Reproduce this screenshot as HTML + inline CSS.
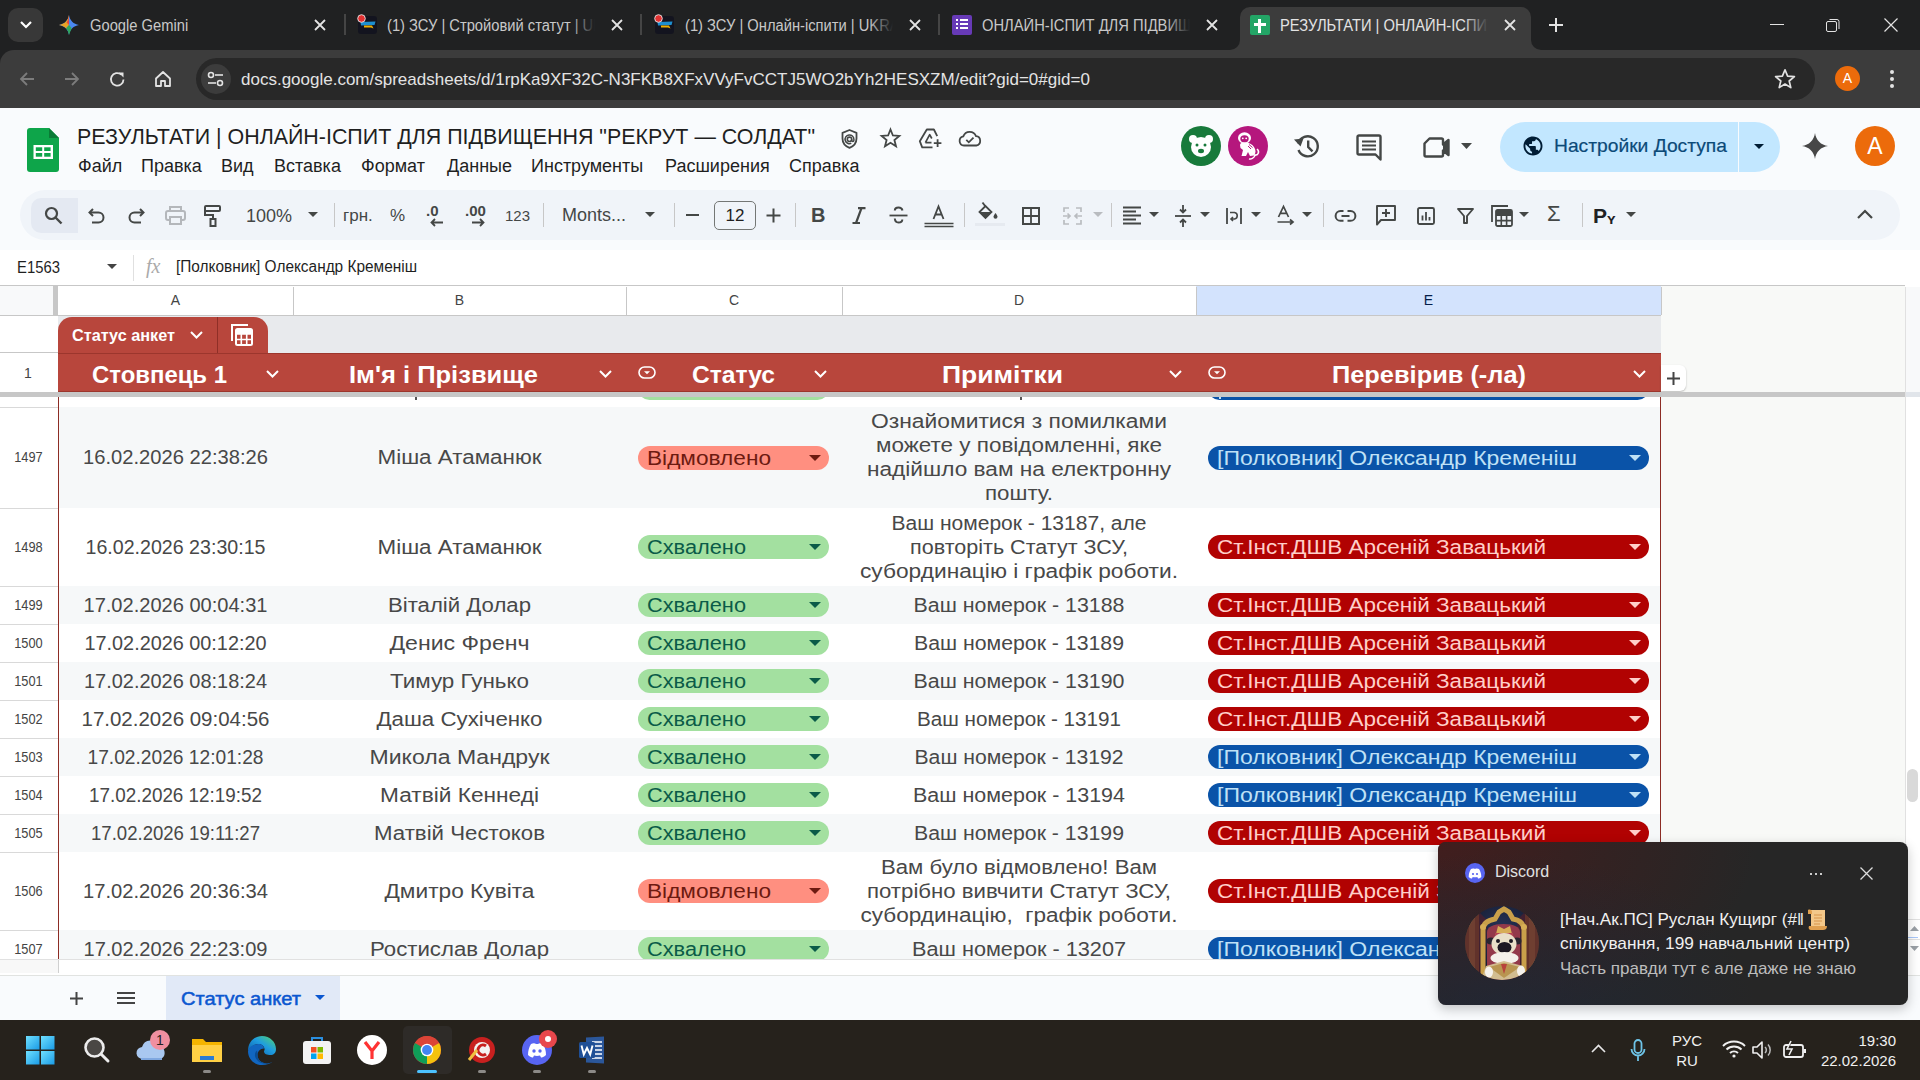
<!DOCTYPE html><html><head><meta charset="utf-8"><style>
*{box-sizing:border-box;margin:0;padding:0}
html,body{width:1920px;height:1080px;overflow:hidden;background:#f9fbfd;font-family:"Liberation Sans",sans-serif}
.ab{position:absolute}
.t{position:absolute;white-space:nowrap;line-height:1}
svg{position:absolute;overflow:visible}
</style></head><body>
<div class="ab" style="left:0;top:0;width:1920px;height:50px;background:#202122"></div>
<div class="ab" style="left:0;top:50px;width:1920px;height:58px;background:#3c3c3c"></div>
<div class="ab" style="left:0;top:50px;width:16px;height:16px;background:#202122"></div>
<div class="ab" style="left:0;top:50px;width:16px;height:16px;background:#3c3c3c;border-top-left-radius:14px"></div>
<div class="ab" style="left:8px;top:8px;width:35px;height:34px;background:#383838;border-radius:10px"></div>
<svg style="left:19px;top:19px" width="14" height="12"><path d="M2 3 L7 8 L12 3" stroke="#fff" stroke-width="2.2" fill="none"/></svg>
<div class="ab" style="left:1240px;top:7px;width:291px;height:43px;background:#3c3c3c;border-radius:10px 10px 0 0"></div>
<div class="ab" style="left:1230px;top:40px;width:10px;height:10px;background:#3c3c3c"></div><div class="ab" style="left:1220px;top:30px;width:20px;height:20px;background:#202122;border-radius:0 0 10px 0"></div>
<div class="ab" style="left:1531px;top:40px;width:10px;height:10px;background:#3c3c3c"></div><div class="ab" style="left:1531px;top:30px;width:20px;height:20px;background:#202122;border-radius:0 0 0 10px"></div>
<div class="t" style="left:90px;top:18px;width:208px;height:20px;overflow:hidden;font-size:16px;color:#c8c8c8"><span style="display:inline-block;transform:scaleX(0.92);transform-origin:left center">Google Gemini</span></div>
<div class="ab" style="left:274px;top:12px;width:24px;height:26px;background:linear-gradient(90deg,rgba(0,0,0,0),#202122)"></div>
<svg style="left:313px;top:18px" width="14" height="14"><path d="M2 2L12 12M12 2L2 12" stroke="#e3e3e3" stroke-width="1.8"/></svg>
<div class="t" style="left:387px;top:18px;width:208px;height:20px;overflow:hidden;font-size:16px;color:#c8c8c8"><span style="display:inline-block;transform:scaleX(0.92);transform-origin:left center">(1) ЗСУ | Стройовий статут | UKRAINE</span></div>
<div class="ab" style="left:571px;top:12px;width:24px;height:26px;background:linear-gradient(90deg,rgba(0,0,0,0),#202122)"></div>
<svg style="left:610px;top:18px" width="14" height="14"><path d="M2 2L12 12M12 2L2 12" stroke="#e3e3e3" stroke-width="1.8"/></svg>
<div class="t" style="left:685px;top:18px;width:208px;height:20px;overflow:hidden;font-size:16px;color:#c8c8c8"><span style="display:inline-block;transform:scaleX(0.92);transform-origin:left center">(1) ЗСУ | Онлайн-іспити | UKRAINE</span></div>
<div class="ab" style="left:869px;top:12px;width:24px;height:26px;background:linear-gradient(90deg,rgba(0,0,0,0),#202122)"></div>
<svg style="left:908px;top:18px" width="14" height="14"><path d="M2 2L12 12M12 2L2 12" stroke="#e3e3e3" stroke-width="1.8"/></svg>
<div class="t" style="left:982px;top:18px;width:208px;height:20px;overflow:hidden;font-size:16px;color:#c8c8c8"><span style="display:inline-block;transform:scaleX(0.92);transform-origin:left center">ОНЛАЙН-ІСПИТ ДЛЯ ПІДВИЩЕННЯ</span></div>
<div class="ab" style="left:1166px;top:12px;width:24px;height:26px;background:linear-gradient(90deg,rgba(0,0,0,0),#202122)"></div>
<svg style="left:1205px;top:18px" width="14" height="14"><path d="M2 2L12 12M12 2L2 12" stroke="#e3e3e3" stroke-width="1.8"/></svg>
<div class="t" style="left:1280px;top:18px;width:208px;height:20px;overflow:hidden;font-size:16px;color:#e3e3e3"><span style="display:inline-block;transform:scaleX(0.92);transform-origin:left center">РЕЗУЛЬТАТИ | ОНЛАЙН-ІСПИТ ДЛЯ</span></div>
<div class="ab" style="left:1464px;top:12px;width:24px;height:26px;background:linear-gradient(90deg,rgba(0,0,0,0),#3c3c3c)"></div>
<svg style="left:1503px;top:18px" width="14" height="14"><path d="M2 2L12 12M12 2L2 12" stroke="#e3e3e3" stroke-width="1.8"/></svg>
<div class="ab" style="left:344px;top:14px;width:2px;height:21px;background:#454545"></div>
<div class="ab" style="left:640px;top:14px;width:2px;height:21px;background:#454545"></div>
<div class="ab" style="left:938px;top:14px;width:2px;height:21px;background:#454545"></div>
<svg style="left:59px;top:15px" width="20" height="20"><defs><linearGradient id="gg" x1="0" y1="0" x2="1" y2="1"><stop offset="0" stop-color="#f2b400"/><stop offset=".35" stop-color="#ea4335"/><stop offset=".6" stop-color="#4285f4"/><stop offset="1" stop-color="#34a853"/></linearGradient></defs><path d="M10 0 C10.8 5.5 14.5 9.2 20 10 C14.5 10.8 10.8 14.5 10 20 C9.2 14.5 5.5 10.8 0 10 C5.5 9.2 9.2 5.5 10 0Z" fill="#4a88f0"/><path d="M10 0 C9.2 5.5 5.5 9.2 0 10 C3 10.4 5.5 11.6 7.2 13.5 L10 10Z" fill="#e9a326"/><path d="M10 0 C9.8 3 9 5.5 7.6 7.6 L10 10Z" fill="#e5483f"/><path d="M10 20 C9.6 17 8.5 14.8 7 13.2 L10 10 L12.6 13Z" fill="#2fa85a"/></svg>
<div class="ab" style="left:358px;top:16px;width:19px;height:18px;background:#13141f;border-radius:3px"></div>
<svg style="left:358px;top:16px" width="19" height="18"><path d="M2.5 6L17.5 5.5L16.5 9L3 9.5Z" fill="#1d8fcf"/><path d="M6 9.5H14L15.5 12.5L13 11.5H6Z" fill="#f0b000"/><circle cx="3.5" cy="2.5" r="3.8" fill="#e33131" stroke="#e8e8e8" stroke-width="0.9"/></svg>
<div class="ab" style="left:655px;top:16px;width:19px;height:18px;background:#13141f;border-radius:3px"></div>
<svg style="left:655px;top:16px" width="19" height="18"><path d="M2.5 6L17.5 5.5L16.5 9L3 9.5Z" fill="#1d8fcf"/><path d="M6 9.5H14L15.5 12.5L13 11.5H6Z" fill="#f0b000"/><circle cx="3.5" cy="2.5" r="3.8" fill="#e33131" stroke="#e8e8e8" stroke-width="0.9"/></svg>
<div class="ab" style="left:952px;top:15px;width:20px;height:20px;background:#673ab7;border-radius:2px"></div>
<div class="ab" style="left:956px;top:19px;width:2px;height:2px;background:#fff"></div><div class="ab" style="left:960px;top:19px;width:8px;height:2px;background:#fff"></div>
<div class="ab" style="left:956px;top:23px;width:2px;height:2px;background:#fff"></div><div class="ab" style="left:960px;top:23px;width:8px;height:2px;background:#fff"></div>
<div class="ab" style="left:956px;top:27px;width:2px;height:2px;background:#fff"></div><div class="ab" style="left:960px;top:27px;width:8px;height:2px;background:#fff"></div>
<div class="ab" style="left:1250px;top:15px;width:20px;height:20px;background:#23a566;border-radius:2px"></div>
<div class="ab" style="left:1254px;top:23px;width:12px;height:3px;background:#fff"></div><div class="ab" style="left:1258px;top:19px;width:3px;height:14px;background:#fff"></div>
<svg style="left:1548px;top:17px" width="16" height="16"><path d="M8 1V15M1 8H15" stroke="#e3e3e3" stroke-width="2"/></svg>
<div class="ab" style="left:1770px;top:24px;width:14px;height:1px;background:#e3e3e3"></div>
<svg style="left:1826px;top:18px" width="14" height="14"><rect x="0.5" y="3.5" width="10" height="10" rx="1.5" stroke="#e3e3e3" fill="none"/><path d="M3.5 1.5 H11 a2 2 0 0 1 2 2 V11" stroke="#e3e3e3" fill="none"/></svg>
<svg style="left:1884px;top:18px" width="14" height="14"><path d="M0.5 0.5L13.5 13.5M13.5 0.5L0.5 13.5" stroke="#e3e3e3" stroke-width="1.2"/></svg>
<svg style="left:19px;top:71px" width="16" height="16"><path d="M15 8H2M8 2L2 8L8 14" stroke="#7c7c7c" stroke-width="1.8" fill="none"/></svg>
<svg style="left:64px;top:71px" width="16" height="16"><path d="M1 8H14M8 2L14 8L8 14" stroke="#7c7c7c" stroke-width="1.8" fill="none"/></svg>
<svg style="left:109px;top:71px" width="17" height="17"><path d="M14.5 8.5 A6.3 6.3 0 1 1 12.3 3.6" stroke="#e3e3e3" stroke-width="1.8" fill="none"/><path d="M9.5 1.5 H14.5 V6.5Z" fill="#e3e3e3"/></svg>
<svg style="left:154px;top:70px" width="18" height="18"><path d="M2 8.5L9 2L16 8.5V16H11V11H7V16H2Z" stroke="#e3e3e3" stroke-width="1.8" fill="none" stroke-linejoin="round"/></svg>
<div class="ab" style="left:196px;top:58px;width:1619px;height:42px;background:#282828;border-radius:21px"></div>
<div class="ab" style="left:201px;top:64px;width:30px;height:30px;background:#3c3c3c;border-radius:50%"></div>
<svg style="left:207px;top:71px" width="18" height="16"><circle cx="4" cy="4" r="2.5" stroke="#e3e3e3" stroke-width="1.6" fill="none"/><path d="M8 4H16" stroke="#e3e3e3" stroke-width="1.6"/><circle cx="13" cy="12" r="2.5" stroke="#e3e3e3" stroke-width="1.6" fill="none"/><path d="M1 12H9" stroke="#e3e3e3" stroke-width="1.6"/></svg>
<div class="t" id="url" style="left:241px;top:71px;font-size:17px;color:#e3e3e3">docs.google.com/spreadsheets/d/1rpKa9XF32C-N3FKB8XFxVVyFvCCTJ5WO2bYh2HESXZM/edit?gid=0#gid=0</div>
<svg style="left:1774px;top:68px" width="22" height="22"><path d="M11 1.8L13.6 8.1L20.4 8.6L15.2 13L16.8 19.6L11 16L5.2 19.6L6.8 13L1.6 8.6L8.4 8.1Z" stroke="#e3e3e3" stroke-width="1.7" fill="none" stroke-linejoin="round"/></svg>
<div class="ab" style="left:1835px;top:66px;width:25px;height:25px;background:#ec6b0b;border-radius:50%"></div>
<div class="t" style="left:1835px;top:71px;width:25px;text-align:center;font-size:14px;color:#fff">A</div>
<div class="ab" style="left:1890px;top:70px;width:4px;height:4px;background:#e3e3e3;border-radius:50%"></div>
<div class="ab" style="left:1890px;top:77px;width:4px;height:4px;background:#e3e3e3;border-radius:50%"></div>
<div class="ab" style="left:1890px;top:84px;width:4px;height:4px;background:#e3e3e3;border-radius:50%"></div>
<svg style="left:27px;top:128px" width="32" height="44"><path d="M3 0H22L32 10V41A3 3 0 0 1 29 44H3A3 3 0 0 1 0 41V3A3 3 0 0 1 3 0Z" fill="#0ea54a"/><path d="M22 0L32 10H22Z" fill="#0a7c36"/><rect x="6.5" y="17" width="19.5" height="14" fill="#fff"/><rect x="8.8" y="19.3" width="6.4" height="3.7" fill="#0ea54a"/><rect x="17.2" y="19.3" width="6.4" height="3.7" fill="#0ea54a"/><rect x="8.8" y="25" width="6.4" height="3.7" fill="#0ea54a"/><rect x="17.2" y="25" width="6.4" height="3.7" fill="#0ea54a"/></svg>
<div class="t ka763593ccf" style="left:77px;top:126px;font-size:22px;color:#1f1f1f;transform:scaleX(0.9732);transform-origin:left center;">РЕЗУЛЬТАТИ | ОНЛАЙН-ІСПИТ ДЛЯ ПІДВИЩЕННЯ "РЕКРУТ — СОЛДАТ"</div>
<svg style="left:841px;top:129px" width="17" height="20"><path d="M8.5 1L15.5 3.8V9.5C15.5 14 12.5 17.3 8.5 18.8C4.5 17.3 1.5 14 1.5 9.5V3.8Z" stroke="#444746" stroke-width="1.8" fill="none" stroke-linejoin="round"/><circle cx="8.5" cy="10.3" r="2.2" stroke="#444746" stroke-width="1.6" fill="none"/><path d="M10.7 10.3V11.3A1.1 1.1 0 0 0 12.9 11.3V10.3A4.4 4.4 0 1 0 10.3 14.3" stroke="#444746" stroke-width="1.5" fill="none"/></svg>
<svg style="left:880px;top:128px" width="21" height="20"><path d="M10.5 1.5L12.9 7.5L19.3 7.9L14.4 12L16 18.3L10.5 14.8L5 18.3L6.6 12L1.7 7.9L8.1 7.5Z" stroke="#444746" stroke-width="1.8" fill="none" stroke-linejoin="miter"/></svg>
<svg style="left:919px;top:128px" width="23" height="21"><path d="M18.2 8.1L14.9 1.5H7.8L0.8 13.2L3.2 19.3H13.5" stroke="#444746" stroke-width="1.8" fill="none" stroke-linejoin="round"/><path d="M6.4 14.6L10.7 6.7L12.8 10.5M6.4 14.6H12.5" stroke="#444746" stroke-width="1.7" fill="none" stroke-linejoin="round"/><path d="M18.6 11.3V19M14.8 15.1H22.4" stroke="#444746" stroke-width="1.8"/></svg>
<svg style="left:958px;top:130px" width="24" height="17"><path d="M6 15.5A4.6 4.6 0 0 1 5.3 6.4A6.8 6.8 0 0 1 18 6.2A4.7 4.7 0 0 1 18.3 15.5Z" stroke="#444746" stroke-width="1.8" fill="none" stroke-linejoin="round"/><path d="M8.3 9.8L10.8 12.3L15.5 7.6" stroke="#444746" stroke-width="1.8" fill="none"/></svg>
<div class="t menu" style="left:78px;top:157px;font-size:18px;color:#1f1f1f">Файл</div>
<div class="t menu" style="left:141px;top:157px;font-size:18px;color:#1f1f1f">Правка</div>
<div class="t menu" style="left:221px;top:157px;font-size:18px;color:#1f1f1f">Вид</div>
<div class="t menu" style="left:274px;top:157px;font-size:18px;color:#1f1f1f">Вставка</div>
<div class="t menu" style="left:361px;top:157px;font-size:18px;color:#1f1f1f">Формат</div>
<div class="t menu" style="left:447px;top:157px;font-size:18px;color:#1f1f1f">Данные</div>
<div class="t menu" style="left:531px;top:157px;font-size:18px;color:#1f1f1f">Инструменты</div>
<div class="t menu" style="left:665px;top:157px;font-size:18px;color:#1f1f1f">Расширения</div>
<div class="t menu" style="left:789px;top:157px;font-size:18px;color:#1f1f1f">Справка</div>
<div class="ab" style="left:1181px;top:126px;width:40px;height:40px;background:#187a3b;border-radius:50%"></div>
<svg style="left:1187px;top:132px" width="28" height="28"><circle cx="6" cy="7" r="4" fill="#fff"/><circle cx="22" cy="7" r="4" fill="#fff"/><ellipse cx="14" cy="15" rx="10" ry="10" fill="#fff"/><circle cx="10" cy="13" r="1.5" fill="#187a3b"/><circle cx="18" cy="13" r="1.5" fill="#187a3b"/><ellipse cx="14" cy="19" rx="3" ry="2.2" fill="#187a3b"/></svg>
<div class="ab" style="left:1228px;top:126px;width:40px;height:40px;background:#b5177d;border-radius:50%"></div>
<svg style="left:1228px;top:126px" width="40" height="40"><ellipse cx="16.5" cy="12" rx="6.5" ry="5.8" fill="#fff"/><ellipse cx="16.5" cy="12.8" rx="4.2" ry="3.6" fill="#b5177d"/><circle cx="14.8" cy="12.3" r="0.9" fill="#fff"/><circle cx="18.2" cy="12.3" r="0.9" fill="#fff"/><path d="M12 19C12 17 14 16.5 17 16.5C21 16.5 24 18 26 21C28 24 28 27 26 29.5L22 30L20 26L18 30H13.5L15 24L12.5 22Z" fill="#fff"/><path d="M26 29C31 30 31.5 25 29 23" stroke="#fff" stroke-width="1.6" fill="none"/><path d="M27 29.5C26 32 23 33.5 21 32.8" stroke="#fff" stroke-width="1.4" fill="none"/><path d="M20 20L23 23M21 18.5L24.5 21.5" stroke="#b5177d" stroke-width="1"/></svg>
<svg style="left:1293px;top:133px" width="28" height="27"><path d="M5.2 10.5A10 10 0 1 1 5.5 17" stroke="#444746" stroke-width="2.4" fill="none"/><path d="M1 6.5L7.5 13.5L10.5 5.5Z" fill="#444746"/><path d="M15.2 7.5V14L19.5 18.3" stroke="#444746" stroke-width="2.4" fill="none"/></svg>
<svg style="left:1356px;top:134px" width="27" height="27"><path d="M3 1.5H23A1.5 1.5 0 0 1 24.5 3V25.5L19.5 20.5H3A1.5 1.5 0 0 1 1.5 19V3A1.5 1.5 0 0 1 3 1.5Z" stroke="#444746" stroke-width="2.4" fill="none" stroke-linejoin="round"/><path d="M6 7.5H20M6 11.5H20M6 15.5H20" stroke="#444746" stroke-width="2"/></svg>
<svg style="left:1423px;top:137px" width="28" height="21"><path d="M6.5 1.5H18.5A1.5 1.5 0 0 1 20 3V7.5L25.5 3V18L20 13.5V18A1.5 1.5 0 0 1 18.5 19.5H3A1.5 1.5 0 0 1 1.5 18V6.5Z" stroke="#444746" stroke-width="2.4" fill="none" stroke-linejoin="round"/><path d="M20 7.5L25.5 3V18L20 13.5Z" fill="#444746"/></svg>
<svg style="left:1461px;top:143px" width="12" height="7"><path d="M0 0H11L5.5 6Z" fill="#444746"/></svg>
<div class="ab" style="left:1500px;top:122px;width:280px;height:50px;background:#c2e7ff;border-radius:25px"></div>
<div class="ab" style="left:1738px;top:122px;width:1px;height:50px;background:#f9fbfd"></div>
<svg style="left:1521px;top:134px" width="24" height="24"><g transform="translate(0.6,0.6) scale(0.95)"><path d="M12 2C6.48 2 2 6.48 2 12s4.48 10 10 10 10-4.48 10-10S17.52 2 12 2zm-1 17.93c-3.95-.49-7-3.850-7-7.93 0-.62.08-1.21.21-1.79L9 15v1c0 1.1.9 2 2 2v1.93zm6.9-2.54c-.26-.81-1-1.390-1.9-1.39h-1v-3c0-.55-.45-1-1-1H8v-2h2c.55 0 1-.45 1-1V7h2c1.1 0 2-.9 2-2v-.41c2.93 1.19 5 4.06 5 7.41 0 2.08-.8 3.97-2.1 5.39z" fill="#001d35"/></g></svg>
<div class="t ka38b576d78" style="left:1554px;top:136px;font-size:19px;color:#0b4a78;-webkit-text-stroke:0.2px #0b4a78;transform:scaleX(1.0124);transform-origin:left center;">Настройки Доступа</div>
<svg style="left:1754px;top:144px" width="11" height="6"><path d="M0 0H10L5 5Z" fill="#001d35"/></svg>
<svg style="left:1802px;top:133px" width="26" height="26"><path d="M13 0C13.8 7 19 12.2 26 13C19 13.8 13.8 19 13 26C12.2 19 7 13.8 0 13C7 12.2 12.2 7 13 0Z" fill="#474747"/></svg>
<div class="ab" style="left:1855px;top:126px;width:40px;height:40px;background:#ec6b0b;border-radius:50%"></div>
<div class="t" style="left:1855px;top:135px;width:40px;text-align:center;font-size:23px;color:#fff">A</div>
<div class="ab" style="left:20px;top:190px;width:1880px;height:50px;background:#f0f4f9;border-radius:25px"></div>
<div class="ab" style="left:31px;top:198px;width:47px;height:35px;background:#e4e9f2;border-radius:10px 0 0 10px"></div>
<svg style="left:44px;top:206px" width="20" height="20"><circle cx="7.5" cy="7.5" r="5.5" stroke="#444746" stroke-width="2.2" fill="none"/><path d="M11.5 11.5L17.5 17.5" stroke="#444746" stroke-width="2.4"/></svg>
<svg style="left:88px;top:208px" width="18" height="16"><path d="M5 1L1.5 4.5L5 8" stroke="#444746" stroke-width="2" fill="none"/><path d="M2 4.5H10.5A5 5 0 0 1 10.5 14.5H4" stroke="#444746" stroke-width="2" fill="none"/></svg>
<svg style="left:127px;top:208px" width="18" height="16"><path d="M13 1L16.5 4.5L13 8" stroke="#444746" stroke-width="2" fill="none"/><path d="M16 4.5H7.5A5 5 0 0 0 7.5 14.5H14" stroke="#444746" stroke-width="2" fill="none"/></svg>
<svg style="left:165px;top:206px" width="21" height="19"><path d="M5 5V1H16V5" stroke="#b4b7bb" stroke-width="2" fill="none"/><rect x="1" y="5" width="19" height="9" rx="2" stroke="#b4b7bb" stroke-width="2" fill="none"/><rect x="5" y="11" width="11" height="7" stroke="#b4b7bb" stroke-width="2" fill="#f0f4f9"/></svg>
<svg style="left:204px;top:205px" width="18" height="22"><rect x="1" y="1" width="15" height="5" rx="1" stroke="#444746" stroke-width="2" fill="none"/><path d="M1 4V10H9V14" stroke="#444746" stroke-width="2" fill="none"/><rect x="6.5" y="14" width="5" height="7" stroke="#444746" stroke-width="2" fill="none"/></svg>
<div class="t" style="left:246px;top:207px;font-size:18px;color:#444746">100%</div>
<svg style="left:308px;top:212px" width="11" height="6"><path d="M0 0H10L5 5Z" fill="#444746"/></svg>
<div class="ab" style="left:334px;top:203px;width:1px;height:24px;background:#c7c7c7"></div>
<div class="t" style="left:343px;top:207px;font-size:17px;color:#444746">грн.</div>
<div class="t" style="left:390px;top:207px;font-size:17px;color:#444746">%</div>
<div class="t" style="left:426px;top:203px;font-size:15px;color:#444746;font-weight:bold">.0</div>
<svg style="left:430px;top:218px" width="14" height="9"><path d="M13 4.5H2M5 1L1.5 4.5L5 8" stroke="#444746" stroke-width="1.8" fill="none"/></svg>
<div class="t" style="left:465px;top:203px;font-size:15px;color:#444746;font-weight:bold">.00</div>
<svg style="left:471px;top:218px" width="14" height="9"><path d="M1 4.5H12M9 1L12.5 4.5L9 8" stroke="#444746" stroke-width="1.8" fill="none"/></svg>
<div class="t" style="left:505px;top:208px;font-size:15px;color:#444746">123</div>
<div class="ab" style="left:543px;top:203px;width:1px;height:24px;background:#c7c7c7"></div>
<div class="t" style="left:562px;top:206px;font-size:18px;color:#444746">Monts...</div>
<svg style="left:645px;top:212px" width="11" height="6"><path d="M0 0H10L5 5Z" fill="#444746"/></svg>
<div class="ab" style="left:674px;top:203px;width:1px;height:24px;background:#c7c7c7"></div>
<div class="ab" style="left:686px;top:214px;width:13px;height:2px;background:#444746"></div>
<div class="ab" style="left:714px;top:201px;width:42px;height:29px;border:1px solid #747775;border-radius:5px"></div>
<div class="t" style="left:714px;top:207px;width:42px;text-align:center;font-size:17px;color:#1f1f1f">12</div>
<svg style="left:766px;top:208px" width="15" height="15"><path d="M7.5 0.5V14.5M0.5 7.5H14.5" stroke="#444746" stroke-width="2"/></svg>
<div class="ab" style="left:795px;top:203px;width:1px;height:24px;background:#c7c7c7"></div>
<div class="t" style="left:811px;top:205px;font-size:20px;color:#444746;font-weight:bold">B</div>
<svg style="left:851px;top:207px" width="16" height="17"><path d="M7 1.2H14.5M1.5 16H9M10.5 1.2L5 16" stroke="#444746" stroke-width="2.2" fill="none"/></svg>
<svg style="left:889px;top:205px" width="19" height="20"><path d="M0.5 10.5H18.5" stroke="#444746" stroke-width="1.8"/><path d="M13.5 5.5C13 3.5 11.5 2.5 9.5 2.5C7.5 2.5 5.8 3.5 5.8 5.5M5.8 13.5C6 16 7.5 17.5 9.5 17.5C11.5 17.5 13.3 16.5 13.3 14.5" stroke="#444746" stroke-width="2" fill="none"/></svg>
<svg style="left:924px;top:205px" width="30" height="24"><path d="M9.5 14L14.5 1.5L19.5 14M11.3 9.5H17.7" stroke="#444746" stroke-width="1.8" fill="none"/><path d="M0.5 18.5H29.5M0.5 21.5H29.5" stroke="#444746" stroke-width="1.6"/></svg>
<div class="ab" style="left:964px;top:203px;width:1px;height:24px;background:#c7c7c7"></div>
<svg style="left:975px;top:201px" width="30" height="27"><path d="M7.5 1.5L10.5 5.5" stroke="#444746" stroke-width="1.8"/><path d="M4.5 11L10.5 5L16.5 11L10.5 17Z" stroke="#444746" stroke-width="1.8" fill="none"/><path d="M4.5 11H16.5L10.5 17Z" fill="#444746"/><path d="M20.5 12C20.5 12 22.5 14.5 22.5 15.8A2 2 0 0 1 18.5 15.8C18.5 14.5 20.5 12 20.5 12Z" fill="#444746"/><rect x="0" y="22" width="30" height="3" fill="#e6eaf0"/></svg>
<svg style="left:1022px;top:207px" width="18" height="18"><rect x="1" y="1" width="16" height="16" stroke="#444746" stroke-width="2" fill="none"/><path d="M9 1V17M1 9H17" stroke="#444746" stroke-width="1.8"/></svg>
<svg style="left:1063px;top:207px" width="19" height="18"><path d="M1 5V1H6M13 1H18V5M18 13V17H13M6 17H1V13M0 9H7M4.5 6.5L7 9L4.5 11.5M19 9H12M14.5 6.5L12 9L14.5 11.5" stroke="#b9bcc0" stroke-width="1.7" fill="none"/></svg>
<svg style="left:1093px;top:212px" width="11" height="6"><path d="M0 0H10L5 5Z" fill="#b9bcc0"/></svg>
<div class="ab" style="left:1111px;top:203px;width:1px;height:24px;background:#c7c7c7"></div>
<svg style="left:1123px;top:206px" width="18" height="19"><path d="M0 1.5H18M0 5.5H13M0 9.5H18M0 13.5H13M0 17.5H18" stroke="#444746" stroke-width="1.8"/></svg>
<svg style="left:1149px;top:212px" width="11" height="6"><path d="M0 0H10L5 5Z" fill="#444746"/></svg>
<svg style="left:1175px;top:205px" width="16" height="22"><path d="M0 11H16" stroke="#444746" stroke-width="1.8"/><path d="M8 0V7M5 4.5L8 7.5L11 4.5M8 22V15M5 17.5L8 14.5L11 17.5" stroke="#444746" stroke-width="1.8" fill="none"/></svg>
<svg style="left:1200px;top:212px" width="11" height="6"><path d="M0 0H10L5 5Z" fill="#444746"/></svg>
<svg style="left:1226px;top:208px" width="16" height="16"><path d="M1 0V16M15 0V16" stroke="#444746" stroke-width="1.8"/><path d="M4 4.5H8.5A3.3 3.3 0 0 1 8.5 11H5M7 9L5 11L7 13" stroke="#444746" stroke-width="1.6" fill="none"/></svg>
<svg style="left:1251px;top:212px" width="11" height="6"><path d="M0 0H10L5 5Z" fill="#444746"/></svg>
<svg style="left:1277px;top:206px" width="18" height="19"><path d="M1.5 11L6.5 0.5L11.5 11M3.3 7.3H9.7" stroke="#444746" stroke-width="1.7" fill="none"/><path d="M0.5 16H15M13 13.5L16 16L13 18.5" stroke="#444746" stroke-width="1.7" fill="none"/></svg>
<svg style="left:1302px;top:212px" width="11" height="6"><path d="M0 0H10L5 5Z" fill="#444746"/></svg>
<div class="ab" style="left:1323px;top:203px;width:1px;height:24px;background:#c7c7c7"></div>
<svg style="left:1335px;top:210px" width="22" height="12"><path d="M8.5 1H5.5A4.8 4.8 0 0 0 5.5 10.8H8.5M12.5 1H15.5A4.8 4.8 0 0 1 15.5 10.8H12.5M6.5 6H14.5" stroke="#444746" stroke-width="2" fill="none"/></svg>
<svg style="left:1376px;top:205px" width="20" height="21"><path d="M1 1H19V15H5L1 19.5Z" stroke="#444746" stroke-width="1.9" fill="none" stroke-linejoin="round"/><path d="M10 4V12M6 8H14" stroke="#444746" stroke-width="1.9"/></svg>
<svg style="left:1417px;top:207px" width="18" height="18"><rect x="1" y="1" width="16" height="16" rx="1.5" stroke="#444746" stroke-width="1.9" fill="none"/><path d="M5.5 13.5V8.5M9 13.5V5M12.5 13.5V10" stroke="#444746" stroke-width="1.8"/></svg>
<svg style="left:1457px;top:208px" width="17" height="16"><path d="M1 1H16L10 8V15H7V8Z" stroke="#444746" stroke-width="1.9" fill="none" stroke-linejoin="round"/></svg>
<svg style="left:1491px;top:205px" width="22" height="22"><path d="M1 17V1H17" stroke="#444746" stroke-width="1.8" fill="none"/><rect x="5" y="5" width="16" height="16" rx="1.5" stroke="#444746" stroke-width="1.8" fill="none"/><path d="M5 10.3H21M5 15.6H21M10.3 10.3V21M15.6 10.3V21" stroke="#444746" stroke-width="1.6"/><rect x="5" y="5" width="16" height="5.3" fill="#444746"/></svg>
<svg style="left:1519px;top:212px" width="11" height="6"><path d="M0 0H10L5 5Z" fill="#444746"/></svg>
<div class="t" style="left:1547px;top:203px;font-size:22px;color:#444746">Σ</div>
<div class="ab" style="left:1582px;top:203px;width:1px;height:24px;background:#c7c7c7"></div>
<div class="t" style="left:1593px;top:205px;font-size:21px;color:#202124;font-weight:bold">P</div><div class="t" style="left:1607px;top:211px;font-size:15px;color:#202124;font-weight:bold">ʏ</div>
<svg style="left:1626px;top:212px" width="11" height="6"><path d="M0 0H10L5 5Z" fill="#444746"/></svg>
<svg style="left:1857px;top:209px" width="16" height="10"><path d="M1 9L8 2L15 9" stroke="#444746" stroke-width="2.2" fill="none"/></svg>
<div class="ab" style="left:0;top:250px;width:1920px;height:35px;background:#fff"></div>
<div class="t k8a94c722ee" style="left:17px;top:259px;font-size:17px;color:#1f1f1f;transform:scaleX(0.8745);transform-origin:left center;">E1563</div>
<svg style="left:107px;top:264px" width="11" height="6"><path d="M0 0H10L5 5Z" fill="#444"/></svg>
<div class="ab" style="left:133px;top:255px;width:1px;height:26px;background:#e0e0e0"></div>
<div class="t" style="left:146px;top:256px;font-size:20px;color:#aaa;font-style:italic;font-family:Liberation Serif">fx</div>
<div class="t kb78f55f875" style="left:176px;top:259px;font-size:16px;color:#1f1f1f;transform:scaleX(0.9624);transform-origin:left center;">[Полковник] Олександр Кременіш</div>
<div class="ab" style="left:0;top:285px;width:1920px;height:690px;background:#fff"></div>
<div class="ab" style="left:0;top:285px;width:1905px;height:1px;background:#c7c7c7"></div>
<div class="ab" style="left:0;top:286px;width:53px;height:29px;background:#f8f9fa"></div>
<div class="ab" style="left:53px;top:286px;width:5px;height:29px;background:#c7c7c7"></div>
<div class="ab" style="left:1196px;top:286px;width:465px;height:29px;background:#d3e3fd"></div>
<div class="ab" style="left:1661px;top:286px;width:244px;height:107px;background:#f8f9f7"></div>
<div class="ab" style="left:0;top:315px;width:1661px;height:1px;background:#c7c7c7"></div>
<div class="t" style="left:58px;top:293px;width:235px;text-align:center;font-size:14px;color:#444">A</div>
<div class="ab" style="left:293px;top:287px;width:1px;height:28px;background:#c7c7c7"></div>
<div class="t" style="left:293px;top:293px;width:333px;text-align:center;font-size:14px;color:#444">B</div>
<div class="ab" style="left:626px;top:287px;width:1px;height:28px;background:#c7c7c7"></div>
<div class="t" style="left:626px;top:293px;width:216px;text-align:center;font-size:14px;color:#444">C</div>
<div class="ab" style="left:842px;top:287px;width:1px;height:28px;background:#c7c7c7"></div>
<div class="t" style="left:842px;top:293px;width:354px;text-align:center;font-size:14px;color:#444">D</div>
<div class="ab" style="left:1196px;top:287px;width:1px;height:28px;background:#c7c7c7"></div>
<div class="t" style="left:1196px;top:293px;width:465px;text-align:center;font-size:14px;color:#041e49">E</div>
<div class="ab" style="left:1661px;top:287px;width:1px;height:28px;background:#c7c7c7"></div>
<div class="ab" style="left:1905px;top:287px;width:1px;height:672px;background:#e1e1e1"></div>
<div class="ab" style="left:1906px;top:287px;width:14px;height:106px;background:#f8f9fa"></div>
<div class="ab" style="left:58px;top:316px;width:1603px;height:37px;background:#e8eaed"></div>
<div class="ab" style="left:0;top:352px;width:58px;height:1px;background:#c7c7c7"></div>
<div class="ab" style="left:58px;top:317px;width:210px;height:37px;background:#b8463c;border-radius:14px 14px 0 0"></div>
<div class="ab" style="left:217px;top:317px;width:1px;height:36px;background:#8f2f27"></div>
<div class="t kca7d67acd6" style="left:72px;top:327px;font-size:17px;color:#fff;font-weight:bold;transform:scaleX(0.9554);transform-origin:left center;">Статус анкет</div>
<svg style="left:190px;top:331px" width="13" height="8"><path d="M1 1L6.5 6.5L12 1" stroke="#fff" stroke-width="2" fill="none"/></svg>
<svg style="left:231px;top:324px" width="22" height="22"><path d="M1 17V1H17" stroke="#fff" stroke-width="2" fill="none"/><rect x="5" y="5" width="16" height="16" rx="1.5" stroke="#fff" stroke-width="2" fill="none"/><path d="M5 10H21M5 15.5H21M10.3 10V21M15.7 10V21" stroke="#fff" stroke-width="1.6"/><rect x="5" y="5" width="16" height="5" fill="#fff"/></svg>
<div class="ab" style="left:0;top:353px;width:58px;height:39px;background:#fff"></div>
<div class="t" style="left:0;top:366px;width:56px;text-align:center;font-size:14px;color:#444">1</div>
<div class="ab" style="left:58px;top:353px;width:1603px;height:39px;background:#b8463c;border-top:1px solid #9c362d;border-bottom:1px solid #9c362d"></div>
<div class="t kc30c9cb265" style="left:92px;top:363.5px;font-size:23px;color:#fff;font-weight:bold;transform:scaleX(1.0392);transform-origin:left center;">Стовпець 1</div>
<svg style="left:266px;top:370px" width="13" height="8"><path d="M1 1L6.5 6.5L12 1" stroke="#fff" stroke-width="2" fill="none"/></svg>
<div class="t ka332691c2a" style="left:349px;top:363.5px;font-size:23px;color:#fff;font-weight:bold;transform:scaleX(1.1095);transform-origin:left center;">Ім'я і Прізвище</div>
<svg style="left:599px;top:370px" width="13" height="8"><path d="M1 1L6.5 6.5L12 1" stroke="#fff" stroke-width="2" fill="none"/></svg>
<div class="t k06f4ae7e7a" style="left:692px;top:363.5px;font-size:23px;color:#fff;font-weight:bold;transform:scaleX(1.0708);transform-origin:left center;">Статус</div>
<svg style="left:814px;top:370px" width="13" height="8"><path d="M1 1L6.5 6.5L12 1" stroke="#fff" stroke-width="2" fill="none"/></svg>
<svg style="left:638px;top:366px" width="18" height="13"><rect x="1" y="1" width="16" height="11" rx="5.5" stroke="#fff" stroke-width="1.6" fill="none"/><path d="M6 5.3H12L9 8.3Z" fill="#fff"/></svg>
<div class="t ke3e51732d5" style="left:942px;top:363.5px;font-size:23px;color:#fff;font-weight:bold;transform:scaleX(1.1519);transform-origin:left center;">Примітки</div>
<svg style="left:1169px;top:370px" width="13" height="8"><path d="M1 1L6.5 6.5L12 1" stroke="#fff" stroke-width="2" fill="none"/></svg>
<div class="t kb16fa69f3d" style="left:1332px;top:363.5px;font-size:23px;color:#fff;font-weight:bold;transform:scaleX(1.1035);transform-origin:left center;">Перевірив (-ла)</div>
<svg style="left:1633px;top:370px" width="13" height="8"><path d="M1 1L6.5 6.5L12 1" stroke="#fff" stroke-width="2" fill="none"/></svg>
<svg style="left:1208px;top:366px" width="18" height="13"><rect x="1" y="1" width="16" height="11" rx="5.5" stroke="#fff" stroke-width="1.6" fill="none"/><path d="M6 5.3H12L9 8.3Z" fill="#fff"/></svg>
<div class="ab" style="left:1661px;top:365px;width:25px;height:26px;background:#fff;border-radius:0 6px 6px 0;box-shadow:0 1px 2px rgba(0,0,0,.25)"></div>
<svg style="left:1666px;top:371px" width="15" height="15"><path d="M7.5 1V14M1 7.5H14" stroke="#444" stroke-width="2"/></svg>
<div class="ab" style="left:0;top:392px;width:1905px;height:5px;background:#c7c7c7"></div>
<div class="ab" style="left:1906px;top:392px;width:14px;height:5px;background:#e1e5ea"></div>
<div class="ab" style="left:0;top:397px;width:1905px;height:562px;overflow:hidden">
<div class="ab" style="left:0;top:10px;width:58px;height:1px;background:#e1e1e1"></div>
<div class="ab" style="left:58px;top:0;width:1603px;height:10px;background:#fff"></div>
<div class="ab" style="left:638px;top:-20px;width:191px;height:23px;background:#a3e0a0;border-radius:12px"></div>
<div class="ab" style="left:1208px;top:-20px;width:441px;height:23px;background:#0a53a8;border-radius:12px"></div>
<div class="ab" style="left:415px;top:0;width:2px;height:3px;background:#555"></div>
<div class="ab" style="left:1020px;top:0;width:2px;height:3px;background:#555"></div>
<div class="ab" style="left:1219px;top:0;width:2px;height:2px;background:#bfe1f6"></div>
<div class="ab" style="left:58px;top:10px;width:1603px;height:101px;background:#f6f8f9"></div>
<div class="ab" style="left:0;top:10px;width:58px;height:101px;background:#fff;border-top:1px solid #d9d9d9"></div>
<div class="t k44f882f7ea" style="left:0px;top:53.0px;font-size:14.5px;color:#444;width:57px;text-align:center;transform:scaleX(0.8833);transform-origin:center center;">1497</div>
<div class="t kfe360c2340" style="left:58px;top:50.2px;font-size:20px;color:#484848;width:235px;text-align:center;transform:scaleX(1.0081);transform-origin:center center;">16.02.2026 22:38:26</div>
<div class="t k20bc94f4f2" style="left:293px;top:50.2px;font-size:20px;color:#484848;width:333px;text-align:center;transform:scaleX(1.1197);transform-origin:center center;">Міша Атаманюк</div>
<div class="ab" style="left:638px;top:48.5px;width:191px;height:24px;background:#ff8f80;border-radius:12px"></div>
<div class="t k1b652eee7d" style="left:646.5px;top:50.5px;font-size:20px;color:#6d1a10;transform:scaleX(1.1329);transform-origin:left center;">Відмовлено</div>
<svg style="left:809px;top:57.5px" width="13" height="7"><path d="M0 0H12L6 6Z" fill="#6d1a10"/></svg>
<div class="t k184f5076fe" style="left:842px;top:14.1px;font-size:20px;color:#484848;width:354px;text-align:center;white-space:pre;transform:scaleX(1.1413);transform-origin:center center;">Ознайомитися з помилками</div>
<div class="t k45f185318f" style="left:842px;top:38.1px;font-size:20px;color:#484848;width:354px;text-align:center;white-space:pre;transform:scaleX(1.1234);transform-origin:center center;">можете у повідомленні, яке</div>
<div class="t k80f432f0be" style="left:842px;top:62.1px;font-size:20px;color:#484848;width:354px;text-align:center;white-space:pre;transform:scaleX(1.1328);transform-origin:center center;">надійшло вам на електронну</div>
<div class="t k9b48980030" style="left:842px;top:86.1px;font-size:20px;color:#484848;width:354px;text-align:center;white-space:pre;transform:scaleX(1.1159);transform-origin:center center;">пошту.</div>
<div class="ab" style="left:1208px;top:48.5px;width:441px;height:24px;background:#0a53a8;border-radius:12px"></div>
<div class="t ke9664b81be" style="left:1216.5px;top:50.5px;font-size:20px;color:#bfe1f6;transform:scaleX(1.1501);transform-origin:left center;">[Полковник] Олександр Кременіш</div>
<svg style="left:1629px;top:57.5px" width="13" height="7"><path d="M0 0H12L6 6Z" fill="#bfe1f6"/></svg>
<div class="ab" style="left:58px;top:111px;width:1603px;height:78px;background:#fff"></div>
<div class="ab" style="left:0;top:111px;width:58px;height:78px;background:#fff;border-top:1px solid #d9d9d9"></div>
<div class="t kf9999f0d6a" style="left:0px;top:142.5px;font-size:14.5px;color:#444;width:57px;text-align:center;transform:scaleX(0.8833);transform-origin:center center;">1498</div>
<div class="t ka345ecc6d0" style="left:58px;top:139.7px;font-size:20px;color:#484848;width:235px;text-align:center;transform:scaleX(0.9808);transform-origin:center center;">16.02.2026 23:30:15</div>
<div class="t k20bc94f4f2" style="left:293px;top:139.7px;font-size:20px;color:#484848;width:333px;text-align:center;transform:scaleX(1.1197);transform-origin:center center;">Міша Атаманюк</div>
<div class="ab" style="left:638px;top:138.0px;width:191px;height:24px;background:#a3e0a0;border-radius:12px"></div>
<div class="t kce7f12f769" style="left:646.5px;top:140.0px;font-size:20px;color:#0b5b48;transform:scaleX(1.0887);transform-origin:left center;">Схвалено</div>
<svg style="left:809px;top:147.0px" width="13" height="7"><path d="M0 0H12L6 6Z" fill="#0b5b48"/></svg>
<div class="t k4cb9ad492a" style="left:842px;top:115.6px;font-size:20px;color:#484848;width:354px;text-align:center;white-space:pre;transform:scaleX(1.0514);transform-origin:center center;">Ваш номерок - 13187, але</div>
<div class="t k88d2e6b794" style="left:842px;top:139.6px;font-size:20px;color:#484848;width:354px;text-align:center;white-space:pre;transform:scaleX(1.0775);transform-origin:center center;">повторіть Статут ЗСУ,</div>
<div class="t k9c2efd8e53" style="left:842px;top:163.6px;font-size:20px;color:#484848;width:354px;text-align:center;white-space:pre;transform:scaleX(1.1359);transform-origin:center center;">субординацію і графік роботи.</div>
<div class="ab" style="left:1208px;top:138.0px;width:441px;height:24px;background:#b10202;border-radius:12px"></div>
<div class="t k9b548ee057" style="left:1216.5px;top:140.0px;font-size:20px;color:#ffcfc9;transform:scaleX(1.1254);transform-origin:left center;">Ст.Інст.ДШВ Арсеній Завацький</div>
<svg style="left:1629px;top:147.0px" width="13" height="7"><path d="M0 0H12L6 6Z" fill="#ffcfc9"/></svg>
<div class="ab" style="left:58px;top:189px;width:1603px;height:38px;background:#f6f8f9"></div>
<div class="ab" style="left:0;top:189px;width:58px;height:38px;background:#fff;border-top:1px solid #d9d9d9"></div>
<div class="t k553a699cd9" style="left:0px;top:200.5px;font-size:14.5px;color:#444;width:57px;text-align:center;transform:scaleX(0.8833);transform-origin:center center;">1499</div>
<div class="t kcc3871ae3f" style="left:58px;top:197.7px;font-size:20px;color:#484848;width:235px;text-align:center;transform:scaleX(1.0026);transform-origin:center center;">17.02.2026 00:04:31</div>
<div class="t kc65cfd61ea" style="left:293px;top:197.7px;font-size:20px;color:#484848;width:333px;text-align:center;transform:scaleX(1.1080);transform-origin:center center;">Віталій Долар</div>
<div class="ab" style="left:638px;top:196.0px;width:191px;height:24px;background:#a3e0a0;border-radius:12px"></div>
<div class="t kce7f12f769" style="left:646.5px;top:198.0px;font-size:20px;color:#0b5b48;transform:scaleX(1.0887);transform-origin:left center;">Схвалено</div>
<svg style="left:809px;top:205.0px" width="13" height="7"><path d="M0 0H12L6 6Z" fill="#0b5b48"/></svg>
<div class="t k39313da7ec" style="left:842px;top:197.6px;font-size:20px;color:#484848;width:354px;text-align:center;white-space:pre;transform:scaleX(1.0684);transform-origin:center center;">Ваш номерок - 13188</div>
<div class="ab" style="left:1208px;top:196.0px;width:441px;height:24px;background:#b10202;border-radius:12px"></div>
<div class="t k9b548ee057" style="left:1216.5px;top:198.0px;font-size:20px;color:#ffcfc9;transform:scaleX(1.1254);transform-origin:left center;">Ст.Інст.ДШВ Арсеній Завацький</div>
<svg style="left:1629px;top:205.0px" width="13" height="7"><path d="M0 0H12L6 6Z" fill="#ffcfc9"/></svg>
<div class="ab" style="left:58px;top:227px;width:1603px;height:38px;background:#fff"></div>
<div class="ab" style="left:0;top:227px;width:58px;height:38px;background:#fff;border-top:1px solid #d9d9d9"></div>
<div class="t kf82c9265b1" style="left:0px;top:238.5px;font-size:14.5px;color:#444;width:57px;text-align:center;transform:scaleX(0.8833);transform-origin:center center;">1500</div>
<div class="t k9f335b10fc" style="left:58px;top:235.7px;font-size:20px;color:#484848;width:235px;text-align:center;transform:scaleX(0.9917);transform-origin:center center;">17.02.2026 00:12:20</div>
<div class="t kc664dfb345" style="left:293px;top:235.7px;font-size:20px;color:#484848;width:333px;text-align:center;transform:scaleX(1.1536);transform-origin:center center;">Денис Френч</div>
<div class="ab" style="left:638px;top:234.0px;width:191px;height:24px;background:#a3e0a0;border-radius:12px"></div>
<div class="t kce7f12f769" style="left:646.5px;top:236.0px;font-size:20px;color:#0b5b48;transform:scaleX(1.0887);transform-origin:left center;">Схвалено</div>
<svg style="left:809px;top:243.0px" width="13" height="7"><path d="M0 0H12L6 6Z" fill="#0b5b48"/></svg>
<div class="t kc1a34d8f06" style="left:842px;top:235.6px;font-size:20px;color:#484848;width:354px;text-align:center;white-space:pre;transform:scaleX(1.0633);transform-origin:center center;">Ваш номерок - 13189</div>
<div class="ab" style="left:1208px;top:234.0px;width:441px;height:24px;background:#b10202;border-radius:12px"></div>
<div class="t k9b548ee057" style="left:1216.5px;top:236.0px;font-size:20px;color:#ffcfc9;transform:scaleX(1.1254);transform-origin:left center;">Ст.Інст.ДШВ Арсеній Завацький</div>
<svg style="left:1629px;top:243.0px" width="13" height="7"><path d="M0 0H12L6 6Z" fill="#ffcfc9"/></svg>
<div class="ab" style="left:58px;top:265px;width:1603px;height:38px;background:#f6f8f9"></div>
<div class="ab" style="left:0;top:265px;width:58px;height:38px;background:#fff;border-top:1px solid #d9d9d9"></div>
<div class="t ka51f7f37ec" style="left:0px;top:276.5px;font-size:14.5px;color:#444;width:57px;text-align:center;transform:scaleX(0.8833);transform-origin:center center;">1501</div>
<div class="t k48847ab8f1" style="left:58px;top:273.7px;font-size:20px;color:#484848;width:235px;text-align:center;transform:scaleX(0.9972);transform-origin:center center;">17.02.2026 08:18:24</div>
<div class="t k764d8815d8" style="left:293px;top:273.7px;font-size:20px;color:#484848;width:333px;text-align:center;transform:scaleX(1.1210);transform-origin:center center;">Тимур Гунько</div>
<div class="ab" style="left:638px;top:272.0px;width:191px;height:24px;background:#a3e0a0;border-radius:12px"></div>
<div class="t kce7f12f769" style="left:646.5px;top:274.0px;font-size:20px;color:#0b5b48;transform:scaleX(1.0887);transform-origin:left center;">Схвалено</div>
<svg style="left:809px;top:281.0px" width="13" height="7"><path d="M0 0H12L6 6Z" fill="#0b5b48"/></svg>
<div class="t ke1f4954676" style="left:842px;top:273.6px;font-size:20px;color:#484848;width:354px;text-align:center;white-space:pre;transform:scaleX(1.0684);transform-origin:center center;">Ваш номерок - 13190</div>
<div class="ab" style="left:1208px;top:272.0px;width:441px;height:24px;background:#b10202;border-radius:12px"></div>
<div class="t k9b548ee057" style="left:1216.5px;top:274.0px;font-size:20px;color:#ffcfc9;transform:scaleX(1.1254);transform-origin:left center;">Ст.Інст.ДШВ Арсеній Завацький</div>
<svg style="left:1629px;top:281.0px" width="13" height="7"><path d="M0 0H12L6 6Z" fill="#ffcfc9"/></svg>
<div class="ab" style="left:58px;top:303px;width:1603px;height:38px;background:#fff"></div>
<div class="ab" style="left:0;top:303px;width:58px;height:38px;background:#fff;border-top:1px solid #d9d9d9"></div>
<div class="t k7ccffff433" style="left:0px;top:314.5px;font-size:14.5px;color:#444;width:57px;text-align:center;transform:scaleX(0.8833);transform-origin:center center;">1502</div>
<div class="t kc283ebcf69" style="left:58px;top:311.7px;font-size:20px;color:#484848;width:235px;text-align:center;transform:scaleX(1.0244);transform-origin:center center;">17.02.2026 09:04:56</div>
<div class="t k06c553989e" style="left:293px;top:311.7px;font-size:20px;color:#484848;width:333px;text-align:center;transform:scaleX(1.1143);transform-origin:center center;">Даша Сухіченко</div>
<div class="ab" style="left:638px;top:310.0px;width:191px;height:24px;background:#a3e0a0;border-radius:12px"></div>
<div class="t kce7f12f769" style="left:646.5px;top:312.0px;font-size:20px;color:#0b5b48;transform:scaleX(1.0887);transform-origin:left center;">Схвалено</div>
<svg style="left:809px;top:319.0px" width="13" height="7"><path d="M0 0H12L6 6Z" fill="#0b5b48"/></svg>
<div class="t k491f0471a4" style="left:842px;top:311.6px;font-size:20px;color:#484848;width:354px;text-align:center;white-space:pre;transform:scaleX(1.0329);transform-origin:center center;">Ваш номерок - 13191</div>
<div class="ab" style="left:1208px;top:310.0px;width:441px;height:24px;background:#b10202;border-radius:12px"></div>
<div class="t k9b548ee057" style="left:1216.5px;top:312.0px;font-size:20px;color:#ffcfc9;transform:scaleX(1.1254);transform-origin:left center;">Ст.Інст.ДШВ Арсеній Завацький</div>
<svg style="left:1629px;top:319.0px" width="13" height="7"><path d="M0 0H12L6 6Z" fill="#ffcfc9"/></svg>
<div class="ab" style="left:58px;top:341px;width:1603px;height:38px;background:#f6f8f9"></div>
<div class="ab" style="left:0;top:341px;width:58px;height:38px;background:#fff;border-top:1px solid #d9d9d9"></div>
<div class="t k08c0f1ac01" style="left:0px;top:352.5px;font-size:14.5px;color:#444;width:57px;text-align:center;transform:scaleX(0.8833);transform-origin:center center;">1503</div>
<div class="t k86a7a467cd" style="left:58px;top:349.7px;font-size:20px;color:#484848;width:235px;text-align:center;transform:scaleX(0.9590);transform-origin:center center;">17.02.2026 12:01:28</div>
<div class="t k182a9cfe00" style="left:293px;top:349.7px;font-size:20px;color:#484848;width:333px;text-align:center;transform:scaleX(1.1522);transform-origin:center center;">Микола Мандрук</div>
<div class="ab" style="left:638px;top:348.0px;width:191px;height:24px;background:#a3e0a0;border-radius:12px"></div>
<div class="t kce7f12f769" style="left:646.5px;top:350.0px;font-size:20px;color:#0b5b48;transform:scaleX(1.0887);transform-origin:left center;">Схвалено</div>
<svg style="left:809px;top:357.0px" width="13" height="7"><path d="M0 0H12L6 6Z" fill="#0b5b48"/></svg>
<div class="t k06ce3758e5" style="left:842px;top:349.6px;font-size:20px;color:#484848;width:354px;text-align:center;white-space:pre;transform:scaleX(1.0582);transform-origin:center center;">Ваш номерок - 13192</div>
<div class="ab" style="left:1208px;top:348.0px;width:441px;height:24px;background:#0a53a8;border-radius:12px"></div>
<div class="t ke9664b81be" style="left:1216.5px;top:350.0px;font-size:20px;color:#bfe1f6;transform:scaleX(1.1501);transform-origin:left center;">[Полковник] Олександр Кременіш</div>
<svg style="left:1629px;top:357.0px" width="13" height="7"><path d="M0 0H12L6 6Z" fill="#bfe1f6"/></svg>
<div class="ab" style="left:58px;top:379px;width:1603px;height:38px;background:#fff"></div>
<div class="ab" style="left:0;top:379px;width:58px;height:38px;background:#fff;border-top:1px solid #d9d9d9"></div>
<div class="t k95f2aa5f5c" style="left:0px;top:390.5px;font-size:14.5px;color:#444;width:57px;text-align:center;transform:scaleX(0.8833);transform-origin:center center;">1504</div>
<div class="t k95b2c1f831" style="left:58px;top:387.7px;font-size:20px;color:#484848;width:235px;text-align:center;transform:scaleX(0.9427);transform-origin:center center;">17.02.2026 12:19:52</div>
<div class="t k4902dbe088" style="left:293px;top:387.7px;font-size:20px;color:#484848;width:333px;text-align:center;transform:scaleX(1.1342);transform-origin:center center;">Матвій Кеннеді</div>
<div class="ab" style="left:638px;top:386.0px;width:191px;height:24px;background:#a3e0a0;border-radius:12px"></div>
<div class="t kce7f12f769" style="left:646.5px;top:388.0px;font-size:20px;color:#0b5b48;transform:scaleX(1.0887);transform-origin:left center;">Схвалено</div>
<svg style="left:809px;top:395.0px" width="13" height="7"><path d="M0 0H12L6 6Z" fill="#0b5b48"/></svg>
<div class="t k32f1f4a125" style="left:842px;top:387.6px;font-size:20px;color:#484848;width:354px;text-align:center;white-space:pre;transform:scaleX(1.0734);transform-origin:center center;">Ваш номерок - 13194</div>
<div class="ab" style="left:1208px;top:386.0px;width:441px;height:24px;background:#0a53a8;border-radius:12px"></div>
<div class="t ke9664b81be" style="left:1216.5px;top:388.0px;font-size:20px;color:#bfe1f6;transform:scaleX(1.1501);transform-origin:left center;">[Полковник] Олександр Кременіш</div>
<svg style="left:1629px;top:395.0px" width="13" height="7"><path d="M0 0H12L6 6Z" fill="#bfe1f6"/></svg>
<div class="ab" style="left:58px;top:417px;width:1603px;height:38px;background:#f6f8f9"></div>
<div class="ab" style="left:0;top:417px;width:58px;height:38px;background:#fff;border-top:1px solid #d9d9d9"></div>
<div class="t k7230354f03" style="left:0px;top:428.5px;font-size:14.5px;color:#444;width:57px;text-align:center;transform:scaleX(0.8833);transform-origin:center center;">1505</div>
<div class="t ka5b2c53b1b" style="left:58px;top:425.7px;font-size:20px;color:#484848;width:235px;text-align:center;transform:scaleX(0.9284);transform-origin:center center;">17.02.2026 19:11:27</div>
<div class="t k7951ae17dd" style="left:293px;top:425.7px;font-size:20px;color:#484848;width:333px;text-align:center;transform:scaleX(1.1121);transform-origin:center center;">Матвій Честоков</div>
<div class="ab" style="left:638px;top:424.0px;width:191px;height:24px;background:#a3e0a0;border-radius:12px"></div>
<div class="t kce7f12f769" style="left:646.5px;top:426.0px;font-size:20px;color:#0b5b48;transform:scaleX(1.0887);transform-origin:left center;">Схвалено</div>
<svg style="left:809px;top:433.0px" width="13" height="7"><path d="M0 0H12L6 6Z" fill="#0b5b48"/></svg>
<div class="t k5d114c1736" style="left:842px;top:425.6px;font-size:20px;color:#484848;width:354px;text-align:center;white-space:pre;transform:scaleX(1.0633);transform-origin:center center;">Ваш номерок - 13199</div>
<div class="ab" style="left:1208px;top:424.0px;width:441px;height:24px;background:#b10202;border-radius:12px"></div>
<div class="t k9b548ee057" style="left:1216.5px;top:426.0px;font-size:20px;color:#ffcfc9;transform:scaleX(1.1254);transform-origin:left center;">Ст.Інст.ДШВ Арсеній Завацький</div>
<svg style="left:1629px;top:433.0px" width="13" height="7"><path d="M0 0H12L6 6Z" fill="#ffcfc9"/></svg>
<div class="ab" style="left:58px;top:455px;width:1603px;height:78px;background:#fff"></div>
<div class="ab" style="left:0;top:455px;width:58px;height:78px;background:#fff;border-top:1px solid #d9d9d9"></div>
<div class="t k4304fc0165" style="left:0px;top:486.5px;font-size:14.5px;color:#444;width:57px;text-align:center;transform:scaleX(0.8833);transform-origin:center center;">1506</div>
<div class="t kb1e0313ec6" style="left:58px;top:483.7px;font-size:20px;color:#484848;width:235px;text-align:center;transform:scaleX(1.0081);transform-origin:center center;">17.02.2026 20:36:34</div>
<div class="t kca3ad76bd3" style="left:293px;top:483.7px;font-size:20px;color:#484848;width:333px;text-align:center;transform:scaleX(1.1345);transform-origin:center center;">Дмитро Кувіта</div>
<div class="ab" style="left:638px;top:482.0px;width:191px;height:24px;background:#ff8f80;border-radius:12px"></div>
<div class="t k1b652eee7d" style="left:646.5px;top:484.0px;font-size:20px;color:#6d1a10;transform:scaleX(1.1329);transform-origin:left center;">Відмовлено</div>
<svg style="left:809px;top:491.0px" width="13" height="7"><path d="M0 0H12L6 6Z" fill="#6d1a10"/></svg>
<div class="t k594e877935" style="left:842px;top:459.6px;font-size:20px;color:#484848;width:354px;text-align:center;white-space:pre;transform:scaleX(1.1085);transform-origin:center center;">Вам було відмовлено! Вам</div>
<div class="t k09043aefae" style="left:842px;top:483.6px;font-size:20px;color:#484848;width:354px;text-align:center;white-space:pre;transform:scaleX(1.1102);transform-origin:center center;">потрібно вивчити Статут ЗСУ,</div>
<div class="t k6672e15eb3" style="left:842px;top:507.6px;font-size:20px;color:#484848;width:354px;text-align:center;white-space:pre;transform:scaleX(1.1278);transform-origin:center center;">субординацію,  графік роботи.</div>
<div class="ab" style="left:1208px;top:482.0px;width:441px;height:24px;background:#b10202;border-radius:12px"></div>
<div class="t k9b548ee057" style="left:1216.5px;top:484.0px;font-size:20px;color:#ffcfc9;transform:scaleX(1.1254);transform-origin:left center;">Ст.Інст.ДШВ Арсеній Завацький</div>
<svg style="left:1629px;top:491.0px" width="13" height="7"><path d="M0 0H12L6 6Z" fill="#ffcfc9"/></svg>
<div class="ab" style="left:58px;top:533px;width:1603px;height:38px;background:#f6f8f9"></div>
<div class="ab" style="left:0;top:533px;width:58px;height:38px;background:#fff;border-top:1px solid #d9d9d9"></div>
<div class="t k7d90cb9db1" style="left:0px;top:544.5px;font-size:14.5px;color:#444;width:57px;text-align:center;transform:scaleX(0.8833);transform-origin:center center;">1507</div>
<div class="t ka25ad32f43" style="left:58px;top:541.7px;font-size:20px;color:#484848;width:235px;text-align:center;transform:scaleX(1.0026);transform-origin:center center;">17.02.2026 22:23:09</div>
<div class="t k4b3ee9a0d5" style="left:293px;top:541.7px;font-size:20px;color:#484848;width:333px;text-align:center;transform:scaleX(1.1100);transform-origin:center center;">Ростислав Долар</div>
<div class="ab" style="left:638px;top:540.0px;width:191px;height:24px;background:#a3e0a0;border-radius:12px"></div>
<div class="t kce7f12f769" style="left:646.5px;top:542.0px;font-size:20px;color:#0b5b48;transform:scaleX(1.0887);transform-origin:left center;">Схвалено</div>
<svg style="left:809px;top:549.0px" width="13" height="7"><path d="M0 0H12L6 6Z" fill="#0b5b48"/></svg>
<div class="t k03ddfeb7ea" style="left:842px;top:541.6px;font-size:20px;color:#484848;width:354px;text-align:center;white-space:pre;transform:scaleX(1.0835);transform-origin:center center;">Ваш номерок - 13207</div>
<div class="ab" style="left:1208px;top:540.0px;width:441px;height:24px;background:#0a53a8;border-radius:12px"></div>
<div class="t ke9664b81be" style="left:1216.5px;top:542.0px;font-size:20px;color:#bfe1f6;transform:scaleX(1.1501);transform-origin:left center;">[Полковник] Олександр Кременіш</div>
<svg style="left:1629px;top:549.0px" width="13" height="7"><path d="M0 0H12L6 6Z" fill="#bfe1f6"/></svg>
</div>
<div class="ab" style="left:58px;top:397px;width:1px;height:562px;background:#8c2c24"></div>
<div class="ab" style="left:1660px;top:397px;width:1px;height:562px;background:#8c2c24"></div>
<div class="ab" style="left:1661px;top:397px;width:244px;height:562px;background:#f8f9f7"></div>
<div class="ab" style="left:0;top:959px;width:1905px;height:1px;background:#e1e1e1"></div>
<div class="ab" style="left:0;top:960px;width:58px;height:13px;background:#f8f8f8"></div>
<div class="ab" style="left:58px;top:960px;width:1px;height:13px;background:#d0d0d0"></div>
<div class="ab" style="left:1906px;top:397px;width:14px;height:578px;background:#fff"></div>
<div class="ab" style="left:1907px;top:769px;width:11px;height:33px;background:#d9d9d9;border-radius:6px"></div>
<div class="ab" style="left:1906px;top:919px;width:14px;height:1px;background:#e1e1e1"></div>
<div class="ab" style="left:1906px;top:939px;width:14px;height:1px;background:#e1e1e1"></div>
<div class="ab" style="left:1908px;top:937px;width:10px;height:1px;background:#a8c7fa"></div>
<svg style="left:1910px;top:926px" width="9" height="5"><path d="M0 5H9L4.5 0Z" fill="#9aa0a6"/></svg>
<svg style="left:1910px;top:946px" width="9" height="5"><path d="M0 0H9L4.5 5Z" fill="#9aa0a6"/></svg>
<div class="ab" style="left:0;top:975px;width:1920px;height:45px;background:#f9fbfd;border-top:1px solid #e1e3e1"></div>
<svg style="left:69px;top:991px" width="15" height="15"><path d="M7.5 1V14M1 7.5H14" stroke="#444" stroke-width="2"/></svg>
<svg style="left:117px;top:991px" width="18" height="14"><path d="M0 2H18M0 7H18M0 12H18" stroke="#444" stroke-width="2"/></svg>
<div class="ab" style="left:166px;top:976px;width:174px;height:44px;background:#e1e9f7"></div>
<div class="t k30a233e2b2" style="left:181px;top:990px;font-size:18px;color:#0b57d0;-webkit-text-stroke:0.5px #0b57d0;transform:scaleX(1.1153);transform-origin:left center;">Статус анкет</div>
<svg style="left:315px;top:995px" width="11" height="6"><path d="M0 0H10L5 5Z" fill="#0b57d0"/></svg>
<div class="ab" style="left:0;top:1020px;width:1920px;height:60px;background:#26221c"></div>
<svg style="left:26px;top:1036px" width="29" height="29"><defs><linearGradient id="wl" x1="0" y1="0" x2="1" y2="1"><stop offset="0" stop-color="#6fe0ff"/><stop offset="1" stop-color="#1a9be6"/></linearGradient></defs><rect x="0" y="0" width="13.5" height="13.5" fill="url(#wl)"/><rect x="15" y="0" width="13.5" height="13.5" fill="url(#wl)"/><rect x="0" y="15" width="13.5" height="13.5" fill="url(#wl)"/><rect x="15" y="15" width="13.5" height="13.5" fill="url(#wl)"/></svg>
<svg style="left:83px;top:1036px" width="28" height="28"><circle cx="11.5" cy="11.5" r="9" stroke="#ececec" stroke-width="2.6" fill="#4a4744"/><path d="M18 18L25 25" stroke="#ececec" stroke-width="3" stroke-linecap="round"/></svg>
<svg style="left:136px;top:1037px" width="32" height="24"><path d="M7 22A6 6 0 0 1 6 10A9 9 0 0 1 23 9A7 7 0 0 1 25 22Z" fill="#a9c8f0"/><path d="M5 22H26" stroke="#7fa8e0" stroke-width="2"/></svg>
<div class="ab" style="left:150px;top:1030px;width:20px;height:20px;background:#f08fa0;border-radius:50%"></div>
<div class="t" style="left:150px;top:1033px;width:20px;text-align:center;font-size:14px;color:#222">1</div>
<svg style="left:191px;top:1036px" width="32" height="28"><path d="M1 3H12L15 6H31V26H1Z" fill="#f4b400"/><rect x="1" y="9" width="30" height="17" fill="#ffd045"/><rect x="9" y="20" width="14" height="4" fill="#2b7cd3"/></svg>
<svg style="left:246px;top:1034px" width="32" height="32"><defs><linearGradient id="eg" x1="0" y1="1" x2="1" y2="0"><stop offset="0" stop-color="#0c59a4"/><stop offset=".55" stop-color="#1f9de0"/><stop offset="1" stop-color="#54d86a"/></linearGradient></defs><path d="M2 17C2 8 8.5 2 16 2C24 2 30 8 30 15C30 19 27.5 21 24.5 21C21 21 18 20 18 17.5C18 16.8 18.6 16.4 18.6 15.5C18.6 12.5 16 10 12.5 10C8 10 4.5 13.5 2 17Z" fill="url(#eg)"/><path d="M2 17C4 11.5 8.5 10 12.5 10C15.5 10 18 12 18 14.5C14 14.5 11.5 17.5 11.5 21C11.5 25.5 15.5 29.5 21 29.5C23.5 29.5 26 28.5 27.5 27C25 29.5 20.5 31 16 31C8 31 2 25 2 17Z" fill="#1166c0"/><path d="M11.5 21C11.5 25.5 15.5 29.5 21 29.5C17 30.5 11 28 9.2 23C8.5 21 9 18 11 16.5C11.3 17.8 11.5 19.5 11.5 21Z" fill="#0a4d94"/></svg>
<svg style="left:302px;top:1035px" width="30" height="30"><path d="M10 6V3H20V6" stroke="#2a8fe0" stroke-width="2" fill="none"/><rect x="1" y="6" width="28" height="23" rx="3" fill="#f3f3f3"/><rect x="9" y="12" width="5.5" height="5.5" fill="#f25022"/><rect x="15.5" y="12" width="5.5" height="5.5" fill="#7fba00"/><rect x="9" y="18.5" width="5.5" height="5.5" fill="#00a4ef"/><rect x="15.5" y="18.5" width="5.5" height="5.5" fill="#ffb900"/></svg>
<div class="ab" style="left:357px;top:1035px;width:30px;height:30px;background:#fff;border-radius:50%"></div>
<svg style="left:362px;top:1040px" width="20" height="20"><path d="M3 2L10 11L17 2M10 11V19" stroke="#f33" stroke-width="3.2" fill="none"/></svg>
<div class="ab" style="left:403px;top:1026px;width:49px;height:48px;background:#2e2b28;border-radius:5px"></div>
<svg style="left:412px;top:1035px" width="30" height="30"><circle cx="15" cy="15" r="14" fill="#db4437"/><path d="M15 15L27.1 8A14 14 0 0 1 15 29Z" fill="#f4c20d"/><path d="M15 15L15 29A14 14 0 0 1 2.9 8Z" fill="#0f9d58"/><path d="M2.9 8A14 14 0 0 1 27.1 8L15 8Z" fill="#db4437"/><circle cx="15" cy="15" r="6.3" fill="#fff"/><circle cx="15" cy="15" r="4.9" fill="#4285f4"/></svg>
<div class="ab" style="left:417px;top:1070px;width:20px;height:3px;background:#4cc2ff;border-radius:2px"></div>
<svg style="left:467px;top:1036px" width="30" height="28"><circle cx="15" cy="14" r="13" fill="#c8201f"/><circle cx="15" cy="14" r="8" fill="#f3f3f3"/><path d="M19 10A5 5 0 1 0 19 18" stroke="#c8201f" stroke-width="3" fill="none"/><path d="M2 24L10 14" stroke="#f0c040" stroke-width="3"/></svg>
<div class="ab" style="left:522px;top:1035px;width:30px;height:30px;background:#5865f2;border-radius:50%"></div>
<svg style="left:527px;top:1043px" width="20" height="15"><path d="M4 1C6 0 8 0 9 1H11C12 0 14 0 16 1C18 4 19 8 19 12C17 14 15 14.5 14 14.5L13 12.5C11 13 9 13 7 12.5L6 14.5C5 14.5 3 14 1 12C1 8 2 4 4 1Z" fill="#fff"/><circle cx="7" cy="8" r="1.7" fill="#5865f2"/><circle cx="13" cy="8" r="1.7" fill="#5865f2"/></svg>
<div class="ab" style="left:539px;top:1030px;width:18px;height:18px;background:#e8474c;border-radius:50%"></div>
<div class="ab" style="left:545px;top:1036px;width:6px;height:6px;background:#fff;border-radius:50%"></div>
<svg style="left:577px;top:1036px" width="30" height="28"><path d="M9 1.5L27 0.5V27.5L9 26.5Z" fill="#2b579a"/><path d="M15 6H25M15 10H25M15 14H25M15 18H25M15 22H25" stroke="#fff" stroke-width="1.6"/><rect x="2" y="6" width="16" height="16" rx="1.5" fill="#1f4f96"/><path d="M4.5 9.5L6.8 18.5L10 12L13.2 18.5L15.5 9.5" stroke="#fff" stroke-width="1.9" fill="none"/></svg>
<div class="ab" style="left:203px;top:1070px;width:8px;height:3px;background:#8c8a87;border-radius:2px"></div>
<div class="ab" style="left:478px;top:1070px;width:8px;height:3px;background:#8c8a87;border-radius:2px"></div>
<div class="ab" style="left:533px;top:1070px;width:8px;height:3px;background:#8c8a87;border-radius:2px"></div>
<div class="ab" style="left:588px;top:1070px;width:8px;height:3px;background:#8c8a87;border-radius:2px"></div>
<svg style="left:1591px;top:1044px" width="15" height="9"><path d="M1 8L7.5 1.5L14 8" stroke="#e8e8e8" stroke-width="1.6" fill="none"/></svg>
<svg style="left:1630px;top:1039px" width="16" height="24"><rect x="4.5" y="1" width="7" height="13" rx="3.5" stroke="#6ec4e8" stroke-width="1.8" fill="none"/><path d="M1.5 10A6.5 6.5 0 0 0 14.5 10M8 16.5V22" stroke="#6ec4e8" stroke-width="1.8" fill="none"/></svg>
<div class="t" style="left:1660px;top:1033px;width:54px;text-align:center;font-size:15px;color:#f0f0f0">РУС</div>
<div class="t" style="left:1660px;top:1053px;width:54px;text-align:center;font-size:15px;color:#f0f0f0">RU</div>
<svg style="left:1722px;top:1040px" width="24" height="18"><path d="M1 6A16 16 0 0 1 23 6M4.5 9.5A11 11 0 0 1 19.5 9.5M8 13A6 6 0 0 1 16 13" stroke="#f0f0f0" stroke-width="2" fill="none"/><circle cx="12" cy="16" r="1.6" fill="#f0f0f0"/></svg>
<svg style="left:1752px;top:1040px" width="22" height="20"><path d="M1 7H5L10 2V18L5 13H1Z" stroke="#f0f0f0" stroke-width="1.6" fill="none" stroke-linejoin="round"/><path d="M13 7A4 4 0 0 1 13 13M16 4.5A8 8 0 0 1 16 15.5" stroke="#bbb" stroke-width="1.5" fill="none"/></svg>
<svg style="left:1782px;top:1040px" width="26" height="20"><rect x="2" y="5" width="19" height="12" rx="2" stroke="#f0f0f0" stroke-width="1.8" fill="none"/><rect x="21.5" y="9" width="2.5" height="4" fill="#f0f0f0"/><path d="M9 1L5 9H10L7 15" stroke="#f0f0f0" stroke-width="1.6" fill="#26221c"/></svg>
<div class="t" style="left:1800px;top:1033px;width:96px;text-align:right;font-size:15px;color:#f0f0f0">19:30</div>
<div class="t" style="left:1790px;top:1053px;width:106px;text-align:right;font-size:15px;color:#f0f0f0">22.02.2026</div>
<div class="ab" style="left:1438px;top:842px;width:470px;height:163px;border-radius:8px;overflow:hidden;background:#262626;box-shadow:0 4px 12px rgba(0,0,0,.22)">
<div class="ab" style="left:0;top:0;width:470px;height:163px;background:radial-gradient(ellipse 320px 190px at 0px 0px,rgba(70,28,28,.85),rgba(60,30,30,0) 100%)"></div>
<div class="ab" style="left:0;top:0;width:470px;height:163px;background:radial-gradient(ellipse 260px 160px at 60px 170px,rgba(30,40,60,.6),rgba(30,40,60,0) 100%)"></div>
</div>
<div class="ab" style="left:1465px;top:863px;width:20px;height:20px;background:#5865f2;border-radius:50%"></div>
<svg style="left:1468px;top:868px" width="14" height="11"><path d="M3 1C4 0.5 5.5 0.3 6.3 0.8H7.7C8.5 0.3 10 0.5 11 1C12.5 3 13.3 6 13.3 9C12 10 11 10.5 10 10.5L9.3 9C8 9.4 6 9.4 4.7 9L4 10.5C3 10.5 2 10 0.7 9C0.7 6 1.5 3 3 1Z" fill="#fff"/><circle cx="5" cy="6" r="1.1" fill="#5865f2"/><circle cx="9" cy="6" r="1.1" fill="#5865f2"/></svg>
<div class="t" style="left:1495px;top:864px;font-size:16px;color:#e0e0e0">Discord</div>
<div class="ab" style="left:1810px;top:873px;width:2px;height:2px;background:#ccc"></div>
<div class="ab" style="left:1815px;top:873px;width:2px;height:2px;background:#ccc"></div>
<div class="ab" style="left:1820px;top:873px;width:2px;height:2px;background:#ccc"></div>
<svg style="left:1860px;top:867px" width="13" height="13"><path d="M0.5 0.5L12.5 12.5M12.5 0.5L0.5 12.5" stroke="#ddd" stroke-width="1.3"/></svg>
<svg style="left:1465px;top:906px" width="74" height="74"><defs><clipPath id="avc"><circle cx="37" cy="37" r="37"/></clipPath><radialGradient id="avbg" cx=".5" cy=".35" r=".6"><stop offset="0" stop-color="#27345a"/><stop offset="1" stop-color="#141a2c"/></radialGradient></defs><g clip-path="url(#avc)"><rect width="74" height="74" fill="url(#avbg)"/><path d="M0 0H14V74H0Z" fill="#6d5230"/><path d="M60 0H74V74H60Z" fill="#6d5230"/><path d="M4 6H10V70H4ZM64 6H70V70H64Z" fill="#8f7140"/><path d="M8 0C14 6 18 10 22 14L20 74H0V0Z" fill="#5a1e28" opacity=".6"/><path d="M66 0C60 6 56 10 52 14L54 74H74V0Z" fill="#5a1e28" opacity=".6"/><path d="M18 74V24C18 17 24 14 30 13L34 6L39 3L44 6L48 13C54 14 59 17 59 24V74" stroke="#c9a04a" stroke-width="5" fill="none"/><circle cx="18" cy="21" r="3" fill="#d6ae55"/><circle cx="59" cy="21" r="3" fill="#d6ae55"/><path d="M22 74V26C22 21 28 18 38.5 18C49 18 55 21 55 26V74Z" fill="#93394a"/><path d="M31 28L33 20L39 23L45 20L47 28Z" fill="#d7ad57"/><path d="M30 27H48V30H30Z" fill="#b54451"/><ellipse cx="26" cy="35" rx="4.5" ry="3.5" fill="#2a2530"/><ellipse cx="52" cy="35" rx="4.5" ry="3.5" fill="#2a2530"/><ellipse cx="39" cy="38" rx="12.5" ry="11" fill="#e9dfc8"/><ellipse cx="39.5" cy="41.5" rx="7" ry="5.5" fill="#1c1822"/><circle cx="33" cy="35" r="2" fill="#1c1822"/><circle cx="46" cy="35" r="2" fill="#1c1822"/><ellipse cx="39.5" cy="52" rx="14" ry="6" fill="#f4f1ea"/><path d="M16 74L21 60L39 55L58 60L63 74Z" fill="#d2bd90"/><path d="M24 61L39 57L55 61L39 72Z" fill="#b99550"/><path d="M36 58L39 68L42 58Z" fill="#b8433c"/><ellipse cx="24" cy="66" rx="4" ry="5.5" fill="#f5f2ec"/><ellipse cx="56" cy="65" rx="4" ry="5.5" fill="#f5f2ec"/></g></svg>
<div class="t k456d3fdc97" style="left:1560px;top:911px;font-size:17px;color:#f0f0f0;transform:scaleX(1.0035);transform-origin:left center;">[Нач.Ак.ПС] Руслан Кущирг (#‖</div>
<svg style="left:1806px;top:909px" width="24" height="22"><path d="M5 1H19V19H5Z" fill="#f3c88a"/><path d="M3 17H21C21 20 19 21 17 21H5C3 21 2 19 3 17Z" fill="#e0a050"/><path d="M2 1C4 0 6 1 6 3V5H2Z" fill="#e0a050"/><path d="M8 6H16M8 9H16M8 12H16M8 15H14" stroke="#d8934a" stroke-width="1.2"/></svg>
<div class="t k84db1061af" style="left:1560px;top:935px;font-size:17px;color:#f0f0f0;transform:scaleX(1.0178);transform-origin:left center;">спілкування, 199 навчальний центр)</div>
<div class="t kefc253e301" style="left:1560px;top:960px;font-size:17px;color:#bdbdbd;transform:scaleX(1.0015);transform-origin:left center;">Часть правди тут є але даже не знаю</div>
</body></html>
